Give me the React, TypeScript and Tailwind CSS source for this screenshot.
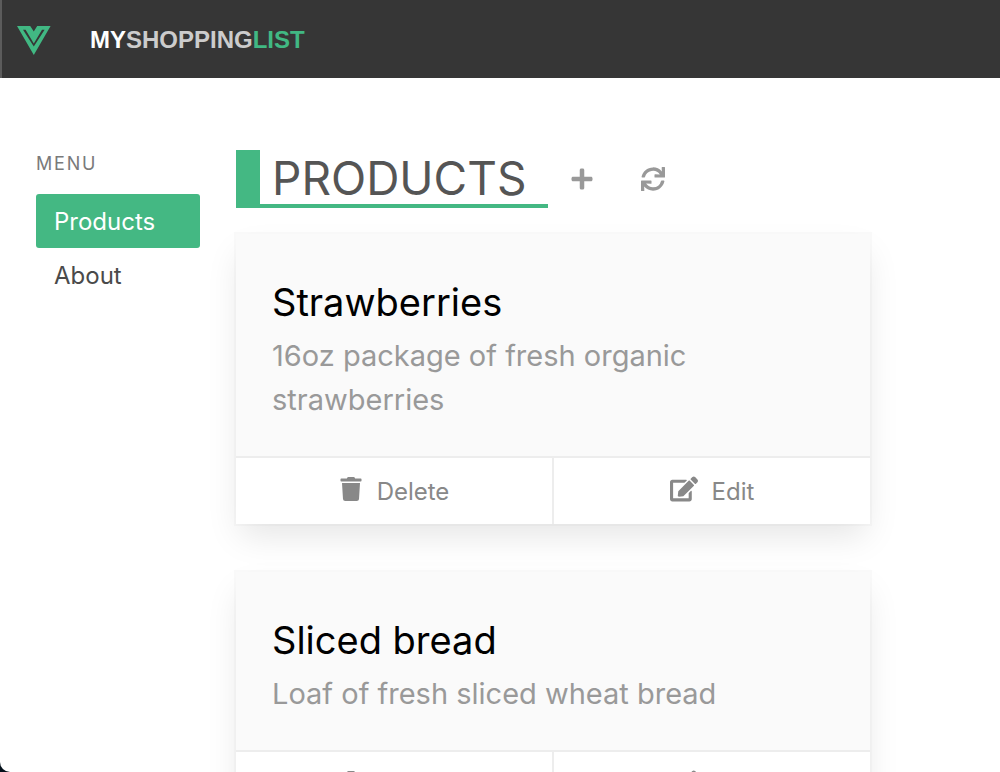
import { FaEdit, FaPlus, FaSync, FaTrash } from "react-icons/fa";

interface Product {
  id: number;
  name: string;
  description: string;
}

const products: Product[] = [
  { id: 10, name: "Strawberries", description: "16oz package of fresh organic strawberries" },
  { id: 20, name: "Sliced bread", description: "Loaf of fresh sliced wheat bread" },
];

function VueLogo() {
  return (
    <svg viewBox="0 -1 34 30" className="h-[30px] w-[34px]" aria-hidden="true">
      <path d="M0 0H13.2L16.8 5.5L20.2 0H33.6L16.8 29Z" fill="#41b883" />
      <path d="M6 3.8H8.6L16.8 17.4L25 3.8H27.6L16.8 20.6Z" fill="#363636" />
    </svg>
  );
}

function HeaderBar() {
  return (
    <header className="flex h-[78px] items-center border-l-2 border-[#5c5c5c] bg-[#363636] pt-0.5 pl-[15px]">
      <a href="#home" aria-label="Home">
        <VueLogo />
      </a>
      <a
        href="#products"
        className="ml-[39px] font-['Liberation_Sans',Arial,sans-serif] text-2xl font-bold uppercase"
      >
        <span className="text-white">My</span>
        <span className="text-[#cccccc]">Shopping</span>
        <span className="text-[#41b883]">List</span>
      </a>
    </header>
  );
}

function NavBar() {
  return (
    <nav className="w-[164px] shrink-0" aria-label="Menu">
      <p className="text-lg leading-7 tracking-widest text-[#7a7a7a] uppercase">Menu</p>
      <ul className="mt-4 text-2xl text-[#4a4a4a]">
        <li>
          <a
            href="#products"
            aria-current="page"
            className="block rounded-[3px] bg-[#44b883] px-[18px] pt-2.5 pb-2 leading-9 text-white"
          >
            Products
          </a>
        </li>
        <li>
          <a href="#about" className="block rounded-[3px] px-[18px] pt-2.5 pb-2 leading-9">
            About
          </a>
        </li>
      </ul>
    </nav>
  );
}

function ListHeader() {
  return (
    <div className="flex items-center text-[#999999]">
      <h2 className="border-b-4 border-l-24 border-[#44b883] pt-0.5 pr-[22px] pl-3 text-[46px] leading-[52px] text-[#555555] uppercase">
        Products
      </h2>
      <button type="button" aria-label="Add product" className="ml-[22px]">
        <FaPlus size={24} />
      </button>
      <button type="button" aria-label="Refresh products" className="ml-[47px]">
        <FaSync size={24} />
      </button>
    </div>
  );
}

function ProductCard({ product }: { product: Product }) {
  return (
    <li className="bg-white shadow-[0_16px_32px_-4px_rgba(10,10,10,0.1),0_0_0_2px_rgba(10,10,10,0.02)]">
      <div className="bg-[#fafafa] px-9 pt-9 pb-[34px]">
        <h3 className="text-[38px] leading-16 text-black">{product.name}</h3>
        <p className="text-[29px] leading-11 text-[#999999]">{product.description}</p>
      </div>
      <footer className="flex border-t-2 border-[#ededed] text-2xl text-[#888888]">
        <button
          type="button"
          className="flex h-[66px] flex-1 items-center justify-center gap-3.5 border-r-2 border-[#ededed] pt-0.5"
        >
          <FaTrash size={24} className="mb-1.5" />
          <span>Delete</span>
        </button>
        <button type="button" className="flex h-[66px] flex-1 items-center justify-center gap-3.5 pt-0.5">
          <FaEdit size={28} className="mb-1.5" />
          <span>Edit</span>
        </button>
      </footer>
    </li>
  );
}

export default function App() {
  return (
    <div className="h-screen bg-[#04101a] font-[Inter,sans-serif]">
      <div className="h-full overflow-y-auto rounded-bl-[10px] bg-white [scrollbar-width:none]">
        <HeaderBar />
        <div className="flex gap-9 px-9 py-[72px]">
          <NavBar />
          <main className="max-w-[634px] flex-1">
            <ListHeader />
            <ul className="mt-[26px] flex flex-col gap-12">
              {products.map((product) => (
                <ProductCard key={product.id} product={product} />
              ))}
            </ul>
          </main>
        </div>
      </div>
    </div>
  );
}
